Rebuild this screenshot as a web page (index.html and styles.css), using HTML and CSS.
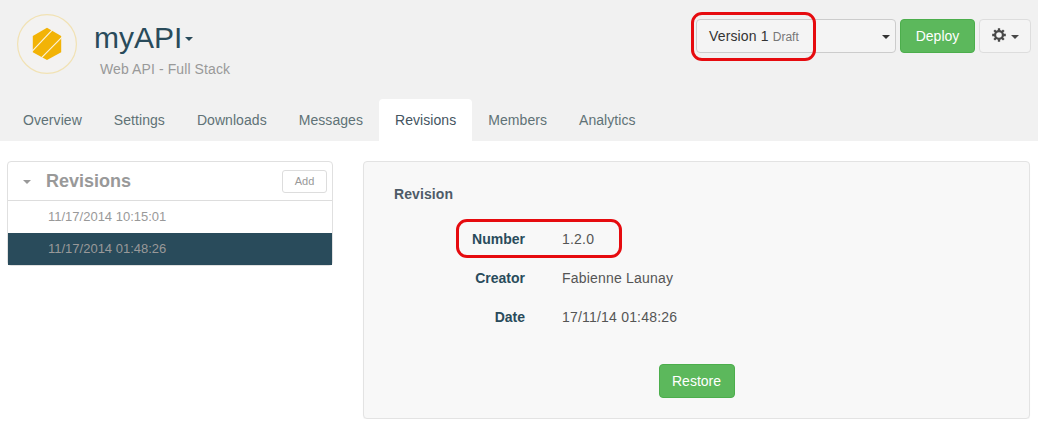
FILE: index.html
```html
<!DOCTYPE html>
<html lang="en">
<head>
<meta charset="utf-8">
<title>myAPI - Revisions</title>
<link rel="stylesheet" href="styles.css">
</head>
<body>
<header class="header">
  <div class="header-top">
    <svg class="logo" width="60" height="60" viewBox="0 0 60 60">
      <circle cx="30" cy="30" r="29.4" fill="#f3f2f1" stroke="#f1e2b4" stroke-width="1.2"/>
      <path d="M30 13.8 44.2 22v16.2L30 46 15.8 38.2V22z" fill="#f2b306"/>
      <path d="M15 37.4 35.6 15.6M24.6 43.6 45 23.2" stroke="#fbf3dc" stroke-width="1.2"/>
    </svg>
    <div class="identity">
      <h1 class="api-name">myAPI<span class="caret"></span></h1>
      <p class="api-type">Web API - Full Stack</p>
    </div>
    <div class="actions">
      <div class="version-select">
        <span class="version">Version 1</span><small class="status">Draft</small><span class="caret"></span>
        <span class="highlight highlight-version"></span>
      </div>
      <button class="btn btn-success deploy">Deploy</button>
      <button class="btn btn-gear">
        <svg width="14" height="14" viewBox="0 0 14 14">
          <circle cx="7" cy="7" r="3.9" fill="none" stroke="#484848" stroke-width="2.2"/>
          <path d="M7 .2v2.6M7 11.2v2.6M.2 7h2.6M11.2 7h2.6M2.2 2.2l1.8 1.8M10 10l1.8 1.8M11.8 2.2 10 4M4 10l-1.8 1.8" stroke="#484848" stroke-width="2.3"/>
        </svg>
        <span class="caret"></span>
      </button>
    </div>
  </div>
  <nav class="tabs">
    <a class="tab">Overview</a>
    <a class="tab">Settings</a>
    <a class="tab">Downloads</a>
    <a class="tab">Messages</a>
    <a class="tab active">Revisions</a>
    <a class="tab">Members</a>
    <a class="tab">Analytics</a>
  </nav>
</header>
<main class="content">
  <aside class="sidebar">
    <div class="sidebar-head">
      <span class="caret"></span>
      <h2 class="sidebar-title">Revisions</h2>
      <button class="btn-add">Add</button>
    </div>
    <div class="item">11/17/2014 10:15:01</div>
    <div class="item selected">11/17/2014 01:48:26</div>
  </aside>
  <section class="panel">
    <h3 class="panel-title">Revision</h3>
    <dl class="details">
      <dt>Number</dt><dd>1.2.0</dd>
      <dt>Creator</dt><dd>Fabienne Launay</dd>
      <dt>Date</dt><dd>17/11/14 01:48:26</dd>
    </dl>
    <span class="highlight highlight-number"></span>
    <button class="btn btn-success restore">Restore</button>
  </section>
</main>
</body>
</html>
```
FILE: styles.css
```css
* { box-sizing: border-box; }
body {
  margin: 0;
  background: #fff;
  color: #555;
  font: 14px/20px "Liberation Sans", Arial, sans-serif;
}
h1, h2, h3, p, dl, dd { margin: 0; }
button { font-family: inherit; }
.caret {
  display: inline-block;
  border-top: 4px solid;
  border-left: 4px solid transparent;
  border-right: 4px solid transparent;
}
.header { height: 141px; background: #f1f1f1; }
.header-top {
  display: flex;
  align-items: flex-start;
  height: 99px;
  padding: 14px 7px 0 17px;
}
.logo { flex: none; }
.identity { padding: 4px 0 0 17px; }
.api-name {
  display: flex;
  align-items: center;
  color: #294b5b;
  font-size: 30px;
  font-weight: 400;
  line-height: 40px;
}
.api-name .caret { margin: 2px 0 0 3px; }
.api-type {
  padding: 1px 0 0 6px;
  color: #999;
  letter-spacing: .1px;
}
.actions {
  display: flex;
  gap: 4px;
  margin: 5px 0 0 auto;
}
.version-select {
  position: relative;
  display: flex;
  align-items: center;
  width: 200px;
  height: 34px;
  padding: 0 5px 0 12px;
  border: 1px solid #ccc;
  border-radius: 4px;
  background: #f4f4f4;
  color: #333;
}
.version { letter-spacing: .15px; }
.version-select .caret { margin-top: 2px; }
.status {
  margin: 1px auto 0 4px;
  color: #777;
  font-size: 12px;
}
.btn {
  height: 34px;
  padding: 0 12px;
  border: 1px solid #ddd;
  border-radius: 4px;
  font-size: 14px;
  line-height: 20px;
}
.btn-success {
  border-color: #4cae4c;
  background: #5cb85c;
  color: #fff;
}
.deploy { width: 75px; }
.btn-gear {
  display: flex;
  align-items: center;
  gap: 5px;
  width: 52px;
  background: #f4f4f4;
  color: #484848;
}
.btn-gear svg { flex: none; margin: -2px 0 0 0; }
.btn-gear .caret { margin-top: 2px; }
.highlight {
  position: absolute;
  border: 3px solid #e60b0f;
  border-radius: 11px;
}
.highlight-version { left: -6px; top: -8px; width: 125px; height: 49px; }
.tabs { display: flex; padding-left: 7px; }
.tab {
  height: 42px;
  padding: 11px 16px;
  border-radius: 4px 4px 0 0;
  color: #607276;
  letter-spacing: .06px;
}
.tab.active { background: #fff; color: #44545f; }
.content {
  display: flex;
  align-items: flex-start;
  gap: 30px;
  padding: 20px 8px 0 7px;
}
.sidebar {
  width: 326px;
  border: 1px solid #e0e0e0;
  border-radius: 4px;
  color: #999;
}
.sidebar-head {
  display: flex;
  align-items: center;
  height: 39px;
  padding: 0 5px 0 15px;
  border-bottom: 1px solid #ddd;
}
.sidebar-title {
  margin-left: 15px;
  font-size: 18px;
  font-weight: 700;
}
.sidebar-head .caret { margin-top: 1px; }
.btn-add {
  width: 45px;
  height: 23px;
  margin-left: auto;
  border: 1px solid #ddd;
  border-radius: 3px;
  background: #fff;
  color: #999;
  font-size: 11px;
}
.item { height: 32px; padding: 6px 0 0 40px; font-size: 13px; }
.item.selected { background: #294b5b; }
.panel {
  position: relative;
  width: 667px;
  height: 258px;
  padding: 22px 30px;
  border: 1px solid #e3e3e3;
  border-radius: 4px;
  background: #f8f8f8;
  box-shadow: 0 1px 1px rgba(0, 0, 0, .04);
}
.panel-title {
  color: #4e5b68;
  font-size: 14px;
  letter-spacing: .1px;
}
.details {
  display: grid;
  grid-template-columns: 131px 1fr;
  gap: 19px 37px;
  margin-top: 25px;
}
.details dt {
  color: #294b5b;
  font-weight: 700;
  text-align: right;
}
.details dd { letter-spacing: .2px; }
.highlight-number { left: 92px; top: 57px; width: 166px; height: 39px; }
.restore {
  display: block;
  width: 76px;
  margin: 37px auto 0;
}
```
